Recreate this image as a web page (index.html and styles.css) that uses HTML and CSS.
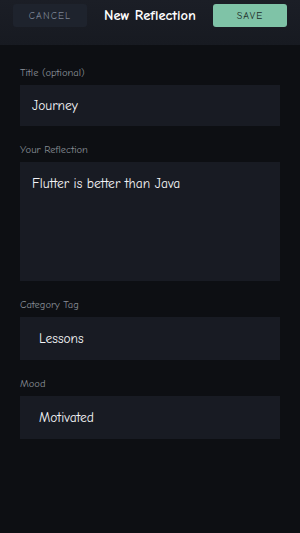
FILE: index.html
```html
<!DOCTYPE html>
<html lang="en">

<head>
  <meta charset="UTF-8">
  <title>New Reflection</title>
  <link rel="stylesheet" href="styles.css">
</head>

<body>
  <!-- top bar -->
  <header>
    <button class="btn-cancel">CANCEL</button>
    <h1>New Reflection</h1>
    <button class="btn-save">SAVE</button>
  </header>

  <main>
    <div class="field">
      <label>Title (optional)</label>
      <div class="box">Journey</div>
    </div>

    <div class="field">
      <label>Your Reflection</label>
      <div class="box box-area">Flutter is better than Java</div>
    </div>

    <div class="field">
      <label>Category Tag</label>
      <div class="box box-select">Lessons</div>
    </div>

    <div class="field">
      <label>Mood</label>
      <div class="box box-select">Motivated</div>
    </div>
  </main>
</body>

</html>
```

FILE: styles.css
```css
/* page */
html,
body {
  margin: 0;
  padding: 0;
  height: 100%;
  background-color: #0d0f13;
  font-family: "Comic Neue", "Open Sans", "DejaVu Sans", sans-serif;
  color: #e8eaee;
}

/* header bar */
header {
  height: 45px;
  box-sizing: border-box;
  padding: 4px 13px 0;
  display: flex;
  justify-content: space-between;
  align-items: flex-start;
  background: linear-gradient(#1b1e26, #171a21);
}

header h1 {
  margin: 0;
  font-size: 14.5px;
  font-weight: bold;
  line-height: 24px;
  color: #ffffff;
}

.btn-cancel,
.btn-save {
  width: 74px;
  height: 23px;
  border: none;
  border-radius: 3px;
  font-family: inherit;
  font-size: 10px;
  letter-spacing: 1.1px;
  padding: 0;
}

.btn-cancel {
  background-color: #1e232d;
  color: #7d8594;
}

.btn-save {
  background-color: #7fc3a7;
  color: #1c2a25;
}

/* form */
main {
  padding: 22px 20px 0;
}

.field {
  margin-bottom: 18px;
}

.field label {
  display: block;
  font-size: 10.5px;
  line-height: 12px;
  color: #8a8f98;
  margin-bottom: 6px;
}

.box {
  background-color: #181b23;
  height: 41px;
  box-sizing: border-box;
  padding: 0 12px;
  font-size: 13.5px;
  line-height: 41px;
  color: #f4f5f7;
}

.box-area {
  height: 119px;
  line-height: 18px;
  padding-top: 13px;
}

.box-select {
  height: 43px;
  line-height: 43px;
  padding-left: 19px;
}
```
